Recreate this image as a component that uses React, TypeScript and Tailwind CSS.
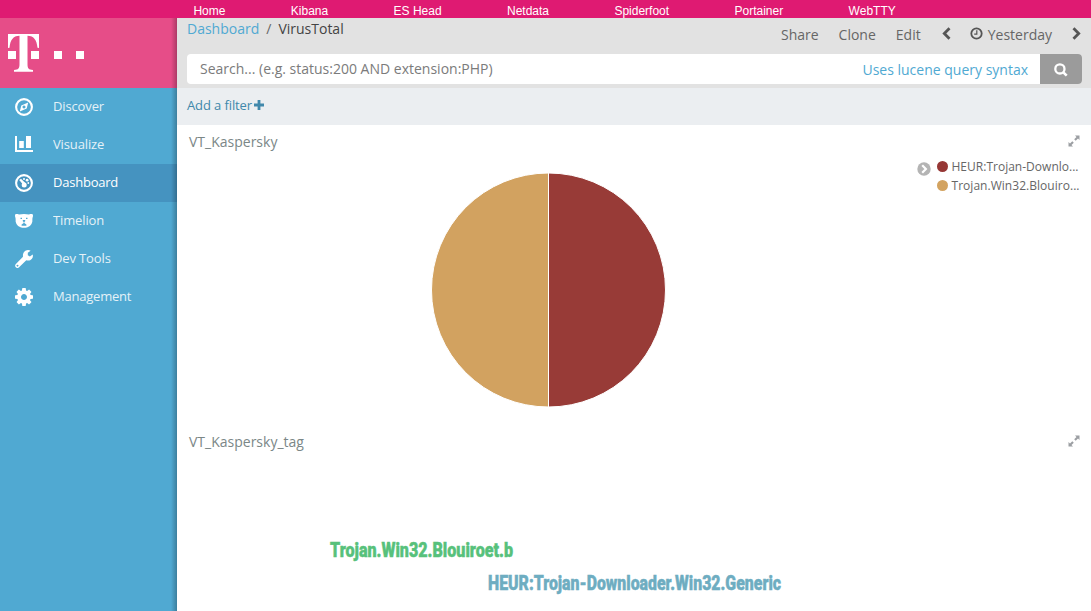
import React from 'react';

const links = ['Home', 'Kibana', 'ES Head', 'Netdata', 'Spiderfoot', 'Portainer', 'WebTTY'];

function Svg({ children, size = 18, box = '0 0 18 18', className = '' }: { children: React.ReactNode; size?: number; box?: string; className?: string }) {
  return (
    <svg width={size} height={size} viewBox={box} fill="currentColor" className={`block shrink-0 ${className}`}>
      {children}
    </svg>
  );
}

const CompassIcon = (
  <Svg>
    <circle cx="9" cy="9" r="7.9" fill="none" stroke="currentColor" strokeWidth="2.100" />
    <path fillRule="evenodd" d="M13.2 4.500 11.700 10.600 4.800 13.500 6.300 7.400ZM9 7.500a1.500 1.500 0 1 0 .01 0Z" />
  </Svg>
);
const BarsIcon = (
  <Svg>
    <path d="M0 0h2v14h16v2H0ZM4.200 5h4.600v7h-4.600ZM11 0h5v12H11Z" />
  </Svg>
);
const GaugeIcon = (
  <Svg>
    <circle cx="9" cy="9" r="7.9" fill="none" stroke="currentColor" strokeWidth="2.100" />
    <circle cx="9.2" cy="11" r="2.5" />
    <path d="M4.200 6 6 4.800l5.200 5-2.200 2Z" />
    <circle cx="9" cy="5" r="1" />
    <circle cx="12.100" cy="6.200" r="1.400" />
    <circle cx="13.300" cy="9" r=".9" />
  </Svg>
);
const BearIcon = (
  <Svg>
    <path
      fillRule="evenodd"
      d="M0 3.600C0 1.800 1.700 1.800 4 2.500Q9 1.300 14 2.500c2.300-.7 4-.7 4 1.100 0 1.300-.5 2-.6 3.100.4 4.200-1.200 7-4.900 8.500q-3.500 1.300-7 0C1.800 13.700.2 10.900.6 6.700.5 5.600 0 4.900 0 3.600ZM5.500 5.800v1.300h1.500V5.800ZM11 5.800v1.300h1.500V5.800ZM7.800 8v1.200l.9.800v1L6.600 12.600v1.200h4.800v-1.200L9.300 11v-1l.9-.8V8Z"
    />
  </Svg>
);
const WrenchIcon = (
  <Svg>
    <path
      fillRule="evenodd"
      d="M13 0q1.600 0 2.600.8L12.800 2.700v2.500l2.100 1.200L17.700 4.500q.7 2.200-.8 4.200c-1.400 1.800-3.700 2.200-5.600 1.500L4.100 17.300c-1 1-2.400.9-3.300 0s-.9-2.300.1-3.300L8 6.800C7.500 3.200 9.600.2 13 0ZM2.500 14.700a.9.900 0 1 0 .01 0Z"
    />
  </Svg>
);
const GearIcon = (
  <Svg box="0 0 1536 1536">
    <path d="M1024 768q0-106-75-181t-181-75-181 75-75 181 75 181 181 75 181-75 75-181zm512-109v222q0 12-8 23t-20 13l-185 28q-19 54-39 91 35 50 107 138 10 12 10 25t-9 23q-27 37-99 108t-94 71q-12 0-26-9l-138-108q-44 23-91 38-16 136-29 186-7 28-36 28H657q-14 0-24.500-8.500T621 1506l-28-184q-49-16-90-37l-141 107q-10 9-25 9-14 0-25-11-126-114-165-168-7-10-7-23 0-12 8-23 15-21 51-66.500t54-70.500q-27-50-41-99L29 913q-13-2-21-12.500T0 877V655q0-12 8-23t19-13l186-28q14-46 39-92-40-57-107-138-10-12-10-24 0-10 9-23 26-36 98.500-107.500T337 135q13 0 26 10l138 107q44-23 91-38 16-136 29-186 7-28 36-28h222q14 0 24.500 8.500T915 30l28 184q49 16 90 37l142-107q9-9 24-9 13 0 25 10 129 119 165 170 7 8 7 22 0 12-8 23-15 21-51 66.500t-54 70.500q26 50 41 98l183 28q13 2 21 12.500t8 23.500z" />
  </Svg>
);

const menu = [
  { label: 'Discover', icon: CompassIcon, tracking: 'tracking-[-0.13px]' },
  { label: 'Visualize', icon: BarsIcon, tracking: 'tracking-[-0.13px]' },
  { label: 'Dashboard', icon: GaugeIcon, active: true, tracking: 'tracking-[-0.22px]' },
  { label: 'Timelion', icon: BearIcon, tracking: 'tracking-[-0.13px]' },
  { label: 'Dev Tools', icon: WrenchIcon, tracking: 'tracking-[-0.13px]' },
  { label: 'Management', icon: GearIcon, tracking: 'tracking-[-0.22px]' },
];

function Chevron({ flip = false }: { flip?: boolean }) {
  return (
    <svg width="9" height="13" viewBox="0 0 9 13" className={flip ? 'block -scale-x-100' : 'block'}>
      <path d="M1.500 1.200 6.700 6.500 1.500 11.800" fill="none" stroke="#555" strokeWidth="2.800" />
    </svg>
  );
}

function PanelHead({ title }: { title: string }) {
  return (
    <div className="flex h-[34px] items-center justify-between pl-3 pr-[11px]">
      <span className="-mt-[2px] text-[14px] text-[#7b8787]">{title}</span>
      <svg width="12" height="12" viewBox="0 0 12 12" fill="#9c9fa3" className="-mt-[3px]">
        <path d="M7 .5h4.500V5L10 3.500 7.700 5.800 6.200 4.300 8.500 2ZM.5 7 2 8.500l2.300-2.300 1.500 1.500L3.500 10 5 11.500H.5Z" />
      </svg>
    </div>
  );
}

const legend = [
  { text: 'HEUR:Trojan-Downlo...', dot: 'bg-[#963735]', w: 127 },
  { text: 'Trojan.Win32.Blouiro...', dot: 'bg-[#d3a360]', w: 128 },
];

export default function App() {
  return (
    <div className="flex h-[611px] w-[1091px] flex-col overflow-hidden bg-white font-['Open_Sans',sans-serif]">
      <nav className="flex h-[18px] shrink-0 gap-[65.400px] bg-[#df1a72] pl-[193.400px] pt-[3px] font-['Liberation_Sans',sans-serif] text-[12px] leading-[16px] text-white">
        {links.map((l) => (
          <span key={l} className="whitespace-nowrap">{l}</span>
        ))}
      </nav>
      <div className="flex min-h-0 flex-1">
        <aside className="relative w-[177px] shrink-0 bg-[#50a9d2]">
          <div className="h-[70px] bg-[#e64d88] pl-2 pt-4">
            <svg width="78" height="38" viewBox="0 0 78 38" fill="#fff" className="block">
              <path d="M0 0h31v14l-1.500-.2C28.700 6 26 2 19.500 1.800V30c0 4.500 1 5.700 5.500 6v1.800H6V36c4.500-.3 5.500-1.500 5.500-6V1.800C5 2 2.300 6 1.500 13.800L0 14Z" />
              <path d="M0 17h8v8H0ZM23 17h8v8h-8ZM46 17h8v8h-8ZM68 17h8v8h-8Z" />
            </svg>
          </div>
          <ul>
            {menu.map((m) => (
              <li key={m.label} className={`flex h-[38px] items-center pl-[15px] text-[13px] text-white ${m.tracking} ${m.active ? 'bg-[#4593c0]' : ''}`}>
                {m.icon}
                <span className={m.active ? 'ml-5 -mt-px' : 'ml-5 -mt-px opacity-85'}>{m.label}</span>
              </li>
            ))}
          </ul>
          <div className="absolute inset-y-0 right-0 w-[6px] bg-linear-to-r from-black/0 to-black/25" />
        </aside>
        <main className="flex min-w-0 flex-1 flex-col">
          <header className="h-[70px] shrink-0 bg-[#e2e2e2] pl-[10px] pr-[9px]">
            <div className="flex h-9 justify-between">
              <div className="flex pt-px text-[14px] leading-5">
                <span className="text-[#50a9d2]">Dashboard</span>
                <span className="ml-[7px] text-[#666]">/</span>
                <span className="ml-[7px] text-[#444]">VirusTotal</span>
              </div>
              <div className="flex h-8 items-center pr-px text-[14px] text-[#666]">
                <span>Share</span>
                <span className="ml-5">Clone</span>
                <span className="ml-5">Edit</span>
                <span className="ml-[21px] -mt-px"><Chevron flip /></span>
                <svg width="13" height="13" viewBox="0 0 13 13" className="ml-[19px] -mt-px" fill="none" stroke="#555">
                  <circle cx="6.500" cy="6.500" r="5.200" strokeWidth="1.800" />
                  <path d="M6.800 3.200v3.900H4.200" strokeWidth="1.200" />
                </svg>
                <span className="ml-[5px]">Yesterday</span>
                <span className="ml-5 -mt-px"><Chevron /></span>
              </div>
            </div>
            <div className="flex h-[30px] overflow-hidden rounded bg-white text-[14px]">
              <span className="flex-1 pl-[13px] leading-[29px] text-[#7b7b7b]">Search... (e.g. status:200 AND extension:PHP)</span>
              <span className="pr-3 leading-[31px] text-[#50a9d2]">Uses lucene query syntax</span>
              <button className="flex w-[42px] items-center justify-center bg-[#9b9b9b]">
                <svg width="14" height="14" viewBox="0 0 14 14" fill="none" stroke="#fff" className="mt-px">
                  <circle cx="5.900" cy="5.900" r="4.600" strokeWidth="2.300" />
                  <path d="m9.300 9.300 3.400 3.400" strokeWidth="2.600" />
                </svg>
              </button>
            </div>
          </header>
          <div className="flex h-[37px] shrink-0 items-center bg-[#ebeef1] pl-[10px] text-[13px] text-[#4088ab]">
            <span className="-mt-px tracking-[-0.11px]">Add a filter</span>
            <svg width="10" height="10" viewBox="0 0 10 10" fill="currentColor" className="-mt-[3px] ml-[2.500px]">
              <path d="M3.600 0h2.800v3.600H10v2.800H6.400V10H3.600V6.400H0V3.600h3.600Z" />
            </svg>
          </div>
          <section className="h-[300px] shrink-0">
            <PanelHead title="VT_Kaspersky" />
            <div className="flex">
              <div className="w-[740px] pl-[254px] pt-[13px]">
                <svg width="236" height="236" viewBox="0 0 236 236" className="block" stroke="#fff">
                  <path d="M117.500 1a117 117 0 0 1 0 234Z" fill="#983b37" />
                  <path d="M117.500 1a117 117 0 0 0 0 234Z" fill="#d2a260" />
                </svg>
              </div>
              <svg width="14" height="14" viewBox="0 0 14 14" className="mt-[3px]">
                <circle cx="7" cy="7" r="6.700" fill="#b4b4b4" />
                <path d="m5.200 3.200 3.700 3.800-3.700 3.800" fill="none" stroke="#fff" strokeWidth="2.200" />
              </svg>
              <ul className="ml-[6px] -mt-[2px]">
                {legend.map((l) => (
                  <li key={l.text} className="flex h-[19px] items-center text-[12px] text-[#666]">
                    <span className={`mr-[3px] size-[11px] rounded-full ${l.dot}`} />
                    <svg width="130" height="18" className="block">
                      <text x="0.500" y="13" fill="#666" fontSize="12" textLength={l.w} lengthAdjust="spacing">{l.text}</text>
                    </svg>
                  </li>
                ))}
              </ul>
            </div>
          </section>
          <section className="min-h-0 flex-1">
            <PanelHead title="VT_Kaspersky_tag" />
            <svg width="914" height="152" viewBox="0 0 914 152" className="block font-[Impact,Roboto,sans-serif] font-black">
              <text x="153" y="98" fontSize="20" fill="#57c17b" stroke="#57c17b" strokeWidth=".45" textLength="183" lengthAdjust="spacingAndGlyphs">Trojan.Win32.Blouiroet.b</text>
              <text x="311" y="131" fontSize="20" fill="#6eadc1" stroke="#6eadc1" strokeWidth=".45" textLength="293" lengthAdjust="spacingAndGlyphs">HEUR:Trojan-Downloader.Win32.Generic</text>
            </svg>
          </section>
        </main>
      </div>
    </div>
  );
}
